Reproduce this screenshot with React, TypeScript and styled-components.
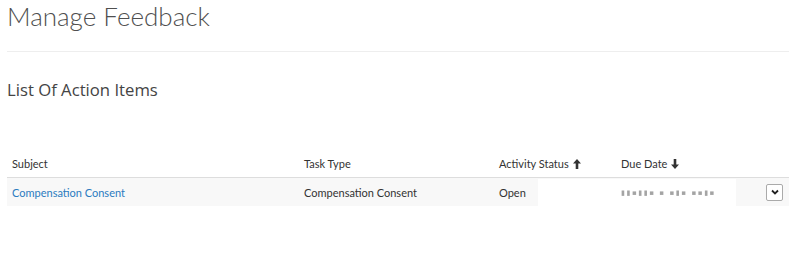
import styled, { createGlobalStyle } from 'styled-components'

const GlobalStyle = createGlobalStyle`
  html, body {
    margin: 0;
    padding: 0;
    background: #fff;
  }
  body {
    font-family: Lato, "Open Sans", sans-serif;
    color: #333;
  }
`

const Page = styled.div`
  width: 782px;
  padding: 0 11px 0 7px;
`

const Title = styled.h1`
  margin: 0;
  padding-top: 1px;
  height: 50px;
  font-family: Lato, sans-serif;
  font-weight: 300;
  font-size: 26px;
  line-height: 30px;
  color: #4f4f4f;
  border-bottom: 1px solid #eeeeee;
`

const Section = styled.h2`
  margin: 0;
  padding-top: 27px;
  height: 72px;
  font-family: "Open Sans", sans-serif;
  font-weight: 400;
  font-size: 16.7px;
  line-height: 22px;
  color: #444;
`

const TableWrap = styled.div`
  position: relative;
`

const Table = styled.table`
  width: 100%;
  border-collapse: collapse;
  table-layout: fixed;
  font-family: Lato, sans-serif;
  font-size: 11px;
`

const Th = styled.th<{ $w?: number }>`
  width: ${(p) => (p.$w ? `${p.$w}px` : 'auto')};
  text-align: left;
  font-weight: 400;
  color: #333;
  padding: 0 5px 7px;
  height: 19px;
  vertical-align: bottom;
  border-bottom: 1px solid #dddddd;
  white-space: nowrap;
`

const Row = styled.tr`
  background: #f8f8f8;
`

const Td = styled.td`
  padding: 0 5px;
  height: 28px;
  color: #333;
  white-space: nowrap;
`

const SubjectLink = styled.a`
  color: #2b7bc0;
  text-decoration: none;
`

const SortIcon = styled.svg`
  margin-left: 4px;
  vertical-align: -1px;
`

const MenuButton = styled.button`
  width: 17px;
  height: 17px;
  padding: 0;
  border: 1px solid #aaa;
  border-radius: 2px;
  background: #fff;
  display: flex;
  align-items: center;
  justify-content: center;
  margin-left: auto;
  margin-right: 1px;
`

const Redaction = styled.div`
  position: absolute;
  left: 531px;
  top: 28px;
  width: 198px;
  height: 31px;
  background: #fff;
  display: flex;
  align-items: center;
  padding-left: 83px;
  padding-bottom: 3px;
  box-sizing: border-box;
`

const Smudge = styled.span`
  font-size: 7px;
  letter-spacing: 1.6px;
  color: #a4a4a4;
  filter: blur(0.5px);
  font-family: "DejaVu Sans", sans-serif;
`

function Arrow({ down }: { down?: boolean }) {
  return (
    <SortIcon width="8" height="10" viewBox="0 0 8 10">
      <path
        d="M4 0 L8 4.5 L5.3 4.5 L5.3 10 L2.7 10 L2.7 4.5 L0 4.5 Z"
        fill="#333"
        transform={down ? 'rotate(180 4 5)' : undefined}
      />
    </SortIcon>
  )
}

export default function App() {
  return (
    <>
      <GlobalStyle />
      <Page>
        <Title>Manage Feedback</Title>
        <Section>List Of Action Items</Section>
        <TableWrap>
          <Table>
            <thead>
              <tr>
                <Th $w={282}>Subject</Th>
                <Th $w={185}>Task Type</Th>
                <Th $w={112}>
                  Activity Status
                  <Arrow />
                </Th>
                <Th $w={134}>
                  Due Date
                  <Arrow down />
                </Th>
                <Th />
              </tr>
            </thead>
            <tbody>
              <Row>
                <Td>
                  <SubjectLink href="#">Compensation Consent</SubjectLink>
                </Td>
                <Td>Compensation Consent</Td>
                <Td>Open</Td>
                <Td />
                <Td>
                  <MenuButton>
                    <svg width="8" height="6" viewBox="0 0 8 6">
                      <path d="M1 1.5 L4 4.5 L7 1.5" fill="none" stroke="#222" strokeWidth="1.8" />
                    </svg>
                  </MenuButton>
                </Td>
              </Row>
            </tbody>
          </Table>
          <Redaction>
            <Smudge>▮▮▪▮▮▪ ▪ ▪▮▪ ▪▪▮▪</Smudge>
          </Redaction>
        </TableWrap>
      </Page>
    </>
  )
}
